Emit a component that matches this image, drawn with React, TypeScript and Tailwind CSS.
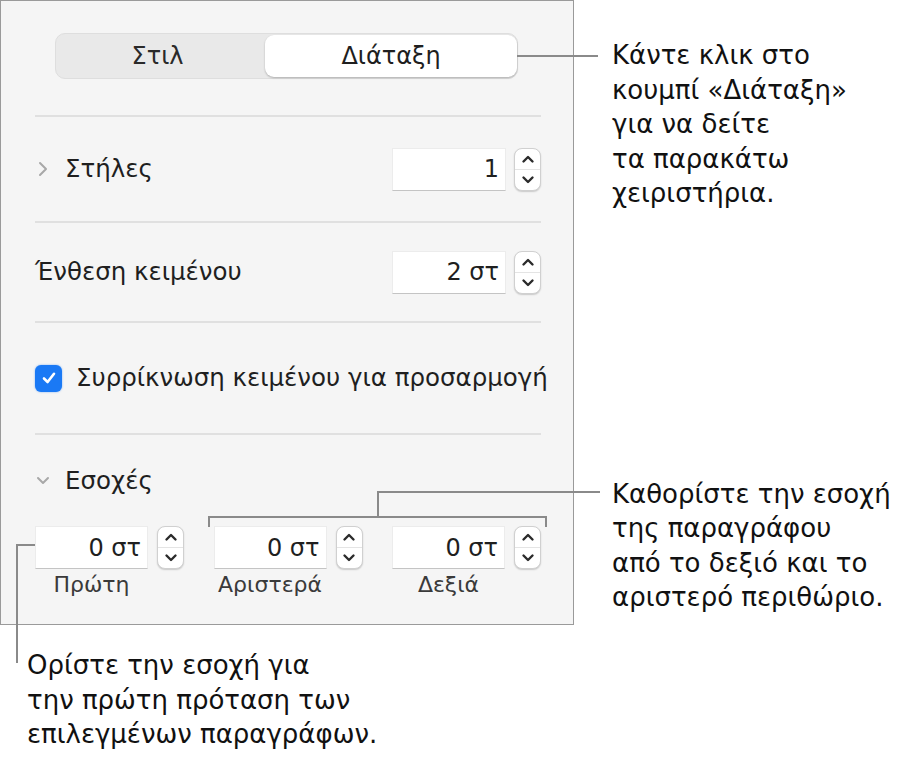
import React from 'react';

const Stepper = () => (
  <div className="flex h-[43px] w-[27px] flex-col items-center rounded-[8px] border border-[#d0d0d0] bg-white shadow-[0_1px_1.5px_rgba(0,0,0,0.18)]">
    <div className="flex flex-1 items-center justify-center">
      <svg width="14" height="10" viewBox="0 0 14 10">
        <path d="M2.5 7.5 L7 3 L11.5 7.5" fill="none" stroke="#2b2b2b" strokeWidth="2.4" strokeLinecap="round" strokeLinejoin="round" />
      </svg>
    </div>
    <div className="h-px w-full bg-[#e4e4e4]" />
    <div className="flex flex-1 items-center justify-center">
      <svg width="14" height="10" viewBox="0 0 14 10">
        <path d="M2.5 2.5 L7 7 L11.5 2.5" fill="none" stroke="#2b2b2b" strokeWidth="2.4" strokeLinecap="round" strokeLinejoin="round" />
      </svg>
    </div>
  </div>
);

const Field = ({ value, width = 'w-[114px]' }: { value: string; width?: string }) => (
  <div
    className={`flex h-[43px] ${width} items-center justify-end border border-[#ececec] border-b-[#c4c4c4] bg-white pr-[6px] text-[24px] text-[#1f1f1f]`}
  >
    {value}
  </div>
);

const Separator = () => <div className="h-[2px] w-full bg-[#e0e0e0]" />;

function Panel() {
  return (
    <div className="flex h-[625px] w-[574px] shrink-0 flex-col border border-[#9a9a9a] bg-[#f5f5f5] pl-[34px] pr-[32px] text-[24.5px] text-[#1f1f1f]">
      {/* Tabs */}
      <div className="h-[114px] pt-[32px]">
        <div className="ml-[20px] flex h-[46px] w-[463px] rounded-[10px] border border-[#dedede] bg-[#e9e9e9] text-[24px]">
          <div className="flex w-[209px] items-center justify-center pr-[6px] text-[#2a2a2a]">Στιλ</div>
          <div className="my-[1px] flex flex-1 items-center justify-center rounded-[9px] bg-white shadow-[0_1px_2px_rgba(0,0,0,0.25)]">
            Διάταξη
          </div>
        </div>
      </div>
      <Separator />

      {/* Columns */}
      <div className="flex h-[104px] items-center justify-between">
        <div className="flex items-center">
          <svg width="12" height="18" viewBox="0 0 12 18" className="ml-[2px] mr-[16px]">
            <path d="M3 3 L9 9 L3 15" fill="none" stroke="#a8a8a8" strokeWidth="2" strokeLinecap="round" strokeLinejoin="round" />
          </svg>
          <span>Στήλες</span>
        </div>
        <div className="flex items-center gap-[8px]">
          <Field value="1" />
          <Stepper />
        </div>
      </div>
      <Separator />

      {/* Text inset */}
      <div className="flex h-[98px] items-center justify-between">
        <span>Ένθεση κειμένου</span>
        <div className="flex items-center gap-[8px]">
          <Field value="2 στ" />
          <Stepper />
        </div>
      </div>
      <Separator />

      {/* Shrink checkbox */}
      <div className="flex h-[110px] items-center whitespace-nowrap">
        <div className="flex h-[27px] w-[27px] shrink-0 items-center justify-center rounded-[6px] bg-[#1a79f5] shadow-[0_0_2px_rgba(26,121,245,0.6)]">
          <svg width="18" height="18" viewBox="0 0 18 18">
            <path d="M4 9.5 L7.6 13 L14 4.8" fill="none" stroke="#ffffff" strokeWidth="2.6" strokeLinecap="round" strokeLinejoin="round" />
          </svg>
        </div>
        <span className="ml-[14px]">Συρρίκνωση κειμένου για προσαρμογή</span>
      </div>
      <Separator />

      {/* Indents */}
      <div className="flex flex-col">
        <div className="mt-[31px] flex h-[30px] items-center">
          <svg width="16" height="12" viewBox="0 0 16 12" className="mr-[14px]">
            <path d="M3 3 L8 8 L13 3" fill="none" stroke="#a8a8a8" strokeWidth="2" strokeLinecap="round" strokeLinejoin="round" />
          </svg>
          <span>Εσοχές</span>
        </div>
        <div className="mt-[30px] flex justify-between">
          {['Πρώτη', 'Αριστερά', 'Δεξιά'].map((label) => (
            <div key={label} className="flex flex-col">
              <div className="flex items-center gap-[9px]">
                <Field value="0 στ" width="w-[113px]" />
                <Stepper />
              </div>
              <div className="mt-[1px] w-[113px] text-center text-[22px] leading-[30px] text-[#3a3a3a]">{label}</div>
            </div>
          ))}
        </div>
      </div>
    </div>
  );
}

export default function App() {
  return (
    <div className="relative h-[758px] w-[902px] overflow-hidden bg-white font-['DejaVu_Sans',Verdana,sans-serif] text-[#111]">
      <div className="flex">
        <Panel />
        <div className="ml-[38px] pt-[38px] text-[26px] leading-[34.5px]">
          <p>
            Κάντε κλικ στο
            <br />
            κουμπί «Διάταξη»
            <br />
            για να δείτε
            <br />
            τα παρακάτω
            <br />
            χειριστήρια.
          </p>
          <p className="mt-[266px]">
            Καθορίστε την εσοχή
            <br />
            της παραγράφου
            <br />
            από το δεξιό και το
            <br />
            αριστερό περιθώριο.
          </p>
        </div>
      </div>
      <p className="ml-[27px] mt-[23px] text-[26px] leading-[34.5px]">
        Ορίστε την εσοχή για
        <br />
        την πρώτη πρόταση των
        <br />
        επιλεγμένων παραγράφων.
      </p>

      {/* leader lines */}
      <div className="absolute left-[517px] top-[55px] h-[2px] w-[81px] bg-[#8a8a8a]" />

      <div className="absolute left-[208px] top-[516px] h-[11px] w-[2px] bg-[#8a8a8a]" />
      <div className="absolute left-[208px] top-[516px] h-[2px] w-[339px] bg-[#8a8a8a]" />
      <div className="absolute left-[545px] top-[516px] h-[11px] w-[2px] bg-[#8a8a8a]" />
      <div className="absolute left-[377px] top-[491px] h-[27px] w-[2px] bg-[#8a8a8a]" />
      <div className="absolute left-[377px] top-[491px] h-[2px] w-[223px] bg-[#8a8a8a]" />

      <div className="absolute left-[16px] top-[544px] h-[2px] w-[19px] bg-[#8a8a8a]" />
      <div className="absolute left-[16px] top-[544px] h-[119px] w-[2px] bg-[#8a8a8a]" />
    </div>
  );
}
